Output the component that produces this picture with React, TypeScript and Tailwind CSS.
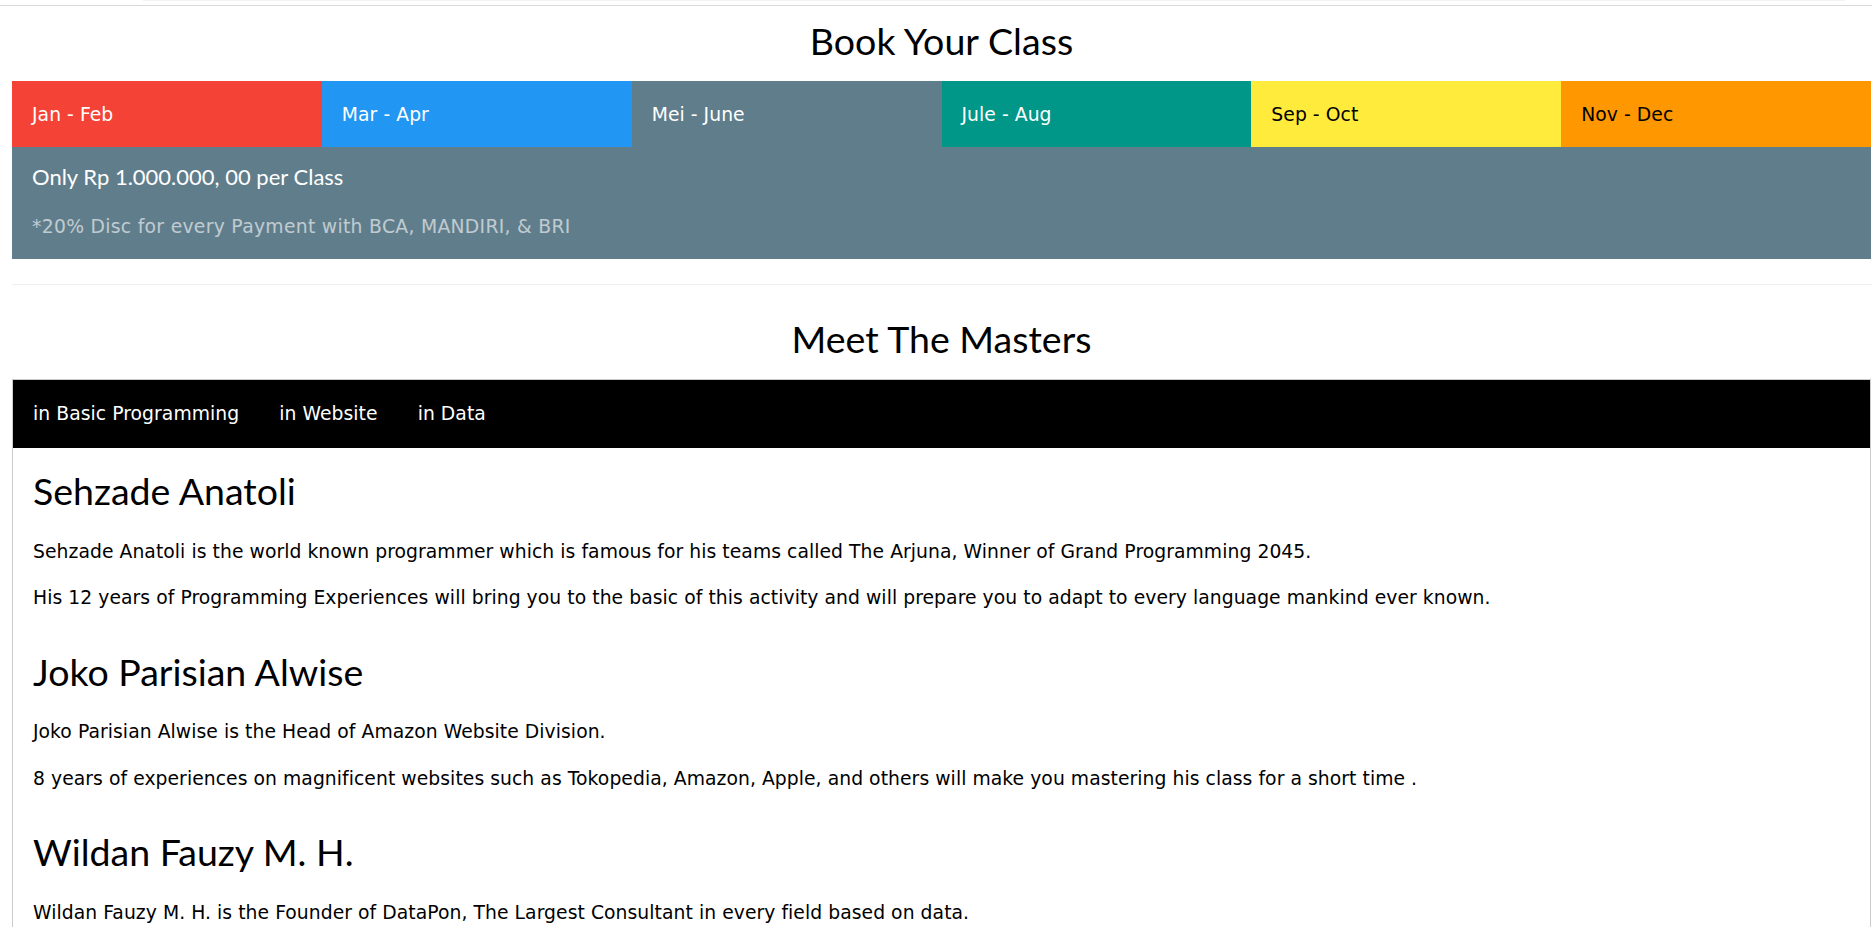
import React from 'react';

const months = [
  { label: 'Jan - Feb', cls: 'bg-[#f44336] text-white' },
  { label: 'Mar - Apr', cls: 'bg-[#2196f3] text-white' },
  { label: 'Mei - June', cls: 'bg-[#607d8b] text-white' },
  { label: 'Jule - Aug', cls: 'bg-[#009688] text-white' },
  { label: 'Sep - Oct', cls: 'bg-[#ffeb3b] text-black' },
  { label: 'Nov - Dec', cls: 'bg-[#ff9800] text-black' },
];

const masters = [
  {
    name: 'Sehzade Anatoli',
    lines: [
      'Sehzade Anatoli is the world known programmer which is famous for his teams called The Arjuna, Winner of Grand Programming 2045.',
      'His 12 years of Programming Experiences will bring you to the basic of this activity and will prepare you to adapt to every language mankind ever known.',
    ],
  },
  {
    name: 'Joko Parisian Alwise',
    lines: [
      'Joko Parisian Alwise is the Head of Amazon Website Division.',
      '8 years of experiences on magnificent websites such as Tokopedia, Amazon, Apple, and others will make you mastering his class for a short time .',
    ],
  },
  {
    name: 'Wildan Fauzy M. H.',
    lines: ['Wildan Fauzy M. H. is the Founder of DataPon, The Largest Consultant in every field based on data.'],
  },
];

const heading = "font-['Lato','Open_Sans',sans-serif] font-normal text-[37.5px] leading-[56px]";

export default function App() {
  return (
    <div className="min-h-screen bg-white text-black font-['DejaVu_Sans','Verdana',sans-serif] text-[18.75px] leading-[28px] tracking-[0.06px]">
      {/* leftover edge of the previous section */}
      <div className="ml-[143px] w-[1702px] h-px bg-[#f3f3f3]" />
      <div className="mt-[4px] h-px bg-[#dadada]" />

      <div className="pl-[12px] pr-[1px]">
        <h2 className={`${heading} text-center mt-[7px] mb-[12px]`}>Book Your Class</h2>

        <div className="grid grid-cols-6">
          {months.map(m => (
            <div key={m.label} className={`${m.cls} px-[20px] pt-[20px] pb-[18px]`}>
              {m.label}
            </div>
          ))}
        </div>

        <div className="bg-[#607d8b] text-white px-[20px] pt-[12.5px] pb-[18px]">
          <h5 className="font-['Lato','Open_Sans',sans-serif] text-[22px] leading-[33.75px] tracking-normal">
            Only Rp 1.000.000, 00 per Class
          </h5>
          <p className="mt-[19.5px] opacity-60 tracking-[0.3px]">*20% Disc for every Payment with BCA, MANDIRI, &amp; BRI</p>
        </div>
      </div>

      <div className="ml-[12px] mt-[25px] h-px bg-[#eeeeee]" />

      <div className="pl-[12px] pr-[1px]">
        <h2 className={`${heading} text-center mt-[26px] mb-[12px] tracking-normal`}>Meet The Masters</h2>

        <div className="border border-[#cccccc]">
          <div className="bg-black text-white flex h-[68px] items-center pt-[1px]">
            <span className="px-[20px]">in Basic Programming</span>
            <span className="px-[20px]">in Website</span>
            <span className="px-[20px]">in Data</span>
          </div>

          <div className="pt-[2.5px]">
            {masters.map(m => (
              <div key={m.name} className="px-[20px] pt-[12.5px] pb-[18.75px]">
                <h3 className={`${heading} tracking-normal`}>{m.name}</h3>
                {m.lines.map(line => (
                  <p key={line} className="mt-[18.75px]">
                    {line}
                  </p>
                ))}
              </div>
            ))}
          </div>
        </div>
      </div>
    </div>
  );
}
